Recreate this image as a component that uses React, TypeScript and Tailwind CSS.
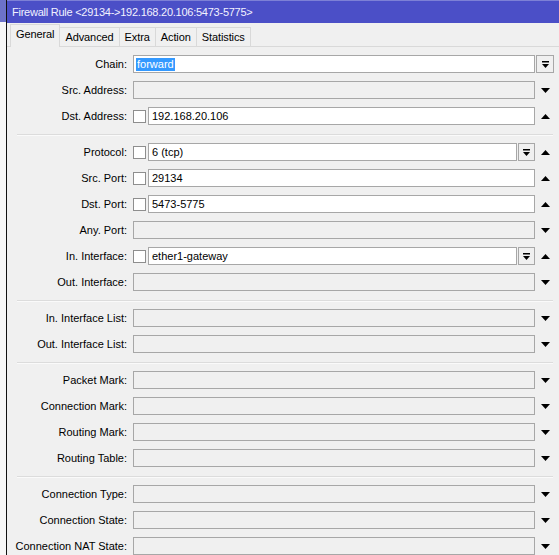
import React from 'react';

type Arrow = 'up' | 'down' | 'box';

interface RowDef {
  label: string;
  value?: string;
  check?: boolean;
  dropdown?: boolean;
  arrow: Arrow;
  selected?: boolean;
}

const sections: RowDef[][] = [
  [
    { label: 'Chain:', value: 'forward', arrow: 'box', selected: true },
    { label: 'Src. Address:', arrow: 'down' },
    { label: 'Dst. Address:', value: '192.168.20.106', check: true, arrow: 'up' },
  ],
  [
    { label: 'Protocol:', value: '6 (tcp)', check: true, dropdown: true, arrow: 'up' },
    { label: 'Src. Port:', value: '29134', check: true, arrow: 'up' },
    { label: 'Dst. Port:', value: '5473-5775', check: true, arrow: 'up' },
    { label: 'Any. Port:', arrow: 'down' },
    { label: 'In. Interface:', value: 'ether1-gateway', check: true, dropdown: true, arrow: 'up' },
    { label: 'Out. Interface:', arrow: 'down' },
  ],
  [
    { label: 'In. Interface List:', arrow: 'down' },
    { label: 'Out. Interface List:', arrow: 'down' },
  ],
  [
    { label: 'Packet Mark:', arrow: 'down' },
    { label: 'Connection Mark:', arrow: 'down' },
    { label: 'Routing Mark:', arrow: 'down' },
    { label: 'Routing Table:', arrow: 'down' },
  ],
  [
    { label: 'Connection Type:', arrow: 'down' },
    { label: 'Connection State:', arrow: 'down' },
    { label: 'Connection NAT State:', arrow: 'down' },
  ],
];

const tabs = ['General', 'Advanced', 'Extra', 'Action', 'Statistics'];

function Triangle({ up }: { up?: boolean }) {
  return (
    <svg width="9" height="5" viewBox="0 0 9 5" className="block">
      {up ? <polygon points="0,5 9,5 4.5,0" fill="#000" /> : <polygon points="0,0 9,0 4.5,5" fill="#000" />}
    </svg>
  );
}

function DropIcon() {
  return (
    <svg width="9" height="9" viewBox="0 0 9 9" className="block">
      <rect x="1" y="1" width="7" height="1.5" fill="#000" />
      <polygon points="1,4 8,4 4.5,8" fill="#000" />
    </svg>
  );
}

function Row({ row }: { row: RowDef }) {
  const enabled = row.value !== undefined;
  return (
    <div className="flex items-center h-[18px]">
      <div className="w-[121px] text-right pr-[1px] whitespace-nowrap leading-none">{row.label}</div>
      <div className="ml-[5px] w-[402px] flex items-center h-full">
        {row.check && <div className="w-[13px] h-[13px] border border-[#8e8e8e] bg-white mr-[2px] shrink-0" />}
        <div
          className={`flex-1 h-full border border-[#a7a7a7] flex items-center pl-[2px] leading-none ${
            enabled ? 'bg-white' : 'bg-[#f0f0f0]'
          }`}
        >
          {row.selected ? (
            <span className="bg-[#3399ff] text-white px-px py-[1px]">{row.value}</span>
          ) : (
            <span className="pl-px">{row.value}</span>
          )}
        </div>
        {row.dropdown && (
          <div className="w-[17px] h-full ml-[1px] border border-[#a7a7a7] bg-[#f0f0f0] flex items-center justify-center shrink-0">
            <DropIcon />
          </div>
        )}
      </div>
      <div className="w-[24px] flex items-center h-full">
        {row.arrow === 'box' ? (
          <div className="ml-[1px] w-[18px] h-full border border-[#a7a7a7] bg-[#f0f0f0] flex items-center justify-center">
            <DropIcon />
          </div>
        ) : (
          <div className="ml-[6px]">
            <Triangle up={row.arrow === 'up'} />
          </div>
        )}
      </div>
    </div>
  );
}

export default function App() {
  return (
    <div className="w-[559px] h-[555px] flex overflow-hidden bg-white font-['Liberation_Sans',Arial,sans-serif] text-[11px] text-black">
      {/* window behind */}
      <div className="w-[7px] shrink-0 flex flex-col border-r border-[#111]">
        <div className="h-[22px] bg-[#6c72c9]" />
        <div className="flex-1 bg-[#f7f7f7]" />
      </div>

      <div className="flex-1 flex flex-col bg-[#f0f0f0] min-w-0">
        <div className="h-[23px] bg-[#4b4fc7] border-t border-[#7d80d6] flex items-center pl-[5px] text-[#f2f2ff] text-[11px] tracking-[-0.25px] whitespace-nowrap">
          Firewall Rule &lt;29134-&gt;192.168.20.106:5473-5775&gt;
        </div>

        <div className="h-[24px] flex items-end pl-[3px] border-b border-[#d9d9d9]">
          {tabs.map((t, i) => (
            <div
              key={t}
              className={`px-[5px] flex items-center border border-[#d9d9d9] tracking-[-0.1px] ${
                i === 0
                  ? 'h-[23px] bg-[#f0f0f0] border-b-0 -mb-px pb-[3px] z-10'
                  : 'h-[19px] bg-[#f0f0f0] border-l-0 border-b-0'
              }`}
            >
              {t}
            </div>
          ))}
        </div>

        <div className="pt-[8px] flex flex-col">
          {sections.map((sec, si) => (
            <React.Fragment key={si}>
              {si > 0 && <div className="mt-[9px] mb-[8px] ml-[10px] mr-[6px] h-px bg-[#dcdcdc] shadow-[0_1px_0_#fafafa]" />}
              <div className="flex flex-col gap-[8px]">
                {sec.map((r) => (
                  <Row key={r.label} row={r} />
                ))}
              </div>
            </React.Fragment>
          ))}
        </div>
      </div>
    </div>
  );
}
